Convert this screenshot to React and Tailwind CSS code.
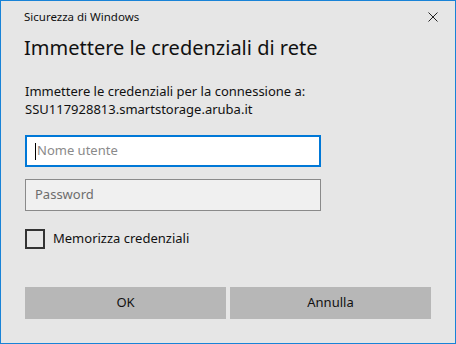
import React from "react";

const App = () => {
  return (
    <div
      className="w-[456px] h-[344px] border border-[#1883d7] bg-[#e6e6e6] flex flex-col text-[#000]"
      style={{ fontFamily: '"Noto Sans", "Open Sans", sans-serif' }}
    >
      <div className="flex items-center justify-between h-[32px] pl-[23px] pr-[17px]">
        <span className="text-[11.5px] leading-none text-[#111]">Sicurezza di Windows</span>
        <svg width="10" height="10" viewBox="0 0 10 10" className="shrink-0">
          <path d="M0.5 0.5 L9.5 9.5 M9.5 0.5 L0.5 9.5" stroke="#222" strokeWidth="1" />
        </svg>
      </div>

      <div className="flex flex-col px-[24px]">
        <h1 className="mt-[1px] text-[20px] leading-[28px] font-normal text-[#111] -ml-[1px]">
          Immettere le credenziali di rete
        </h1>

        <div className="mt-[20px] text-[13px] leading-[18px] text-[#111]">
          <p>Immettere le credenziali per la connessione a:</p>
          <p>SSU117928813.smartstorage.aruba.it</p>
        </div>

        <div className="mt-[17px] w-[296px] h-[32px] border-2 border-[#0078d7] bg-white flex items-center pl-[8px]">
          <span className="w-[1px] h-[17px] bg-black" />
          <span className="text-[13px] text-[#8a8a8a] ml-[1px]">Nome utente</span>
        </div>

        <div className="mt-[12px] w-[296px] h-[32px] border border-[#8a8a8a] bg-[#f0f0f0] flex items-center pl-[9px]">
          <span className="text-[13px] text-[#6d6d6d]">Password</span>
        </div>

        <div className="mt-[18px] flex items-center gap-[8px]">
          <span className="w-[20px] h-[20px] border-2 border-[#333] shrink-0" />
          <span className="text-[13px] text-[#111]">Memorizza credenziali</span>
        </div>

        <div className="mt-[38px] flex gap-[4px]">
          <button className="w-[201px] h-[32px] bg-[#b7b7b7] text-[13px] text-[#111]">OK</button>
          <button className="w-[201px] h-[32px] bg-[#b7b7b7] text-[13px] text-[#111]">Annulla</button>
        </div>
      </div>
    </div>
  );
};

export default App;
